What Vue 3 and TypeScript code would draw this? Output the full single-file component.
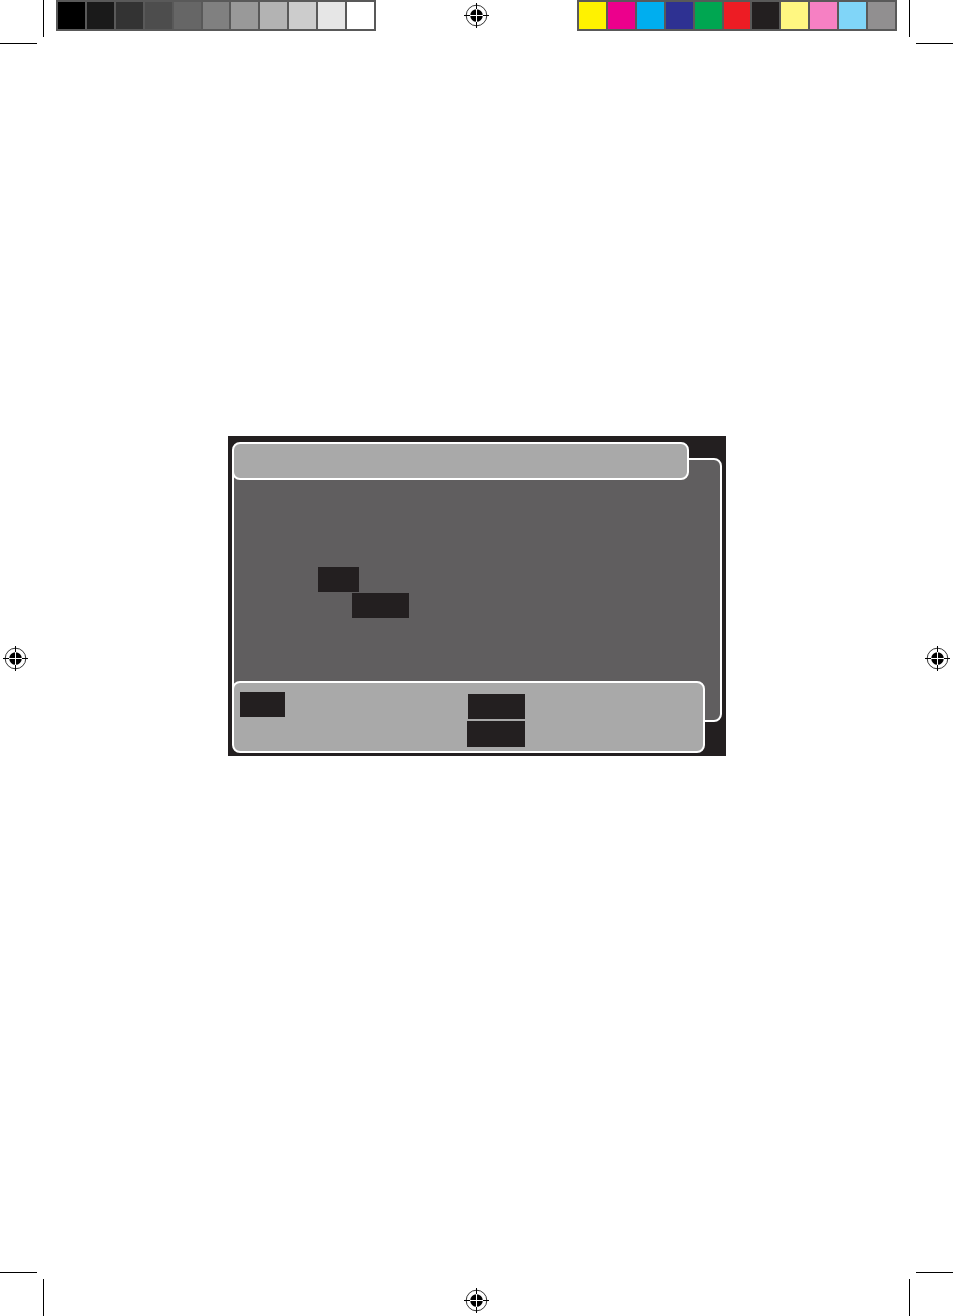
<script setup lang="ts">
import { h } from 'vue'

const grays: string[] = [
  '#000000', '#1a1a1a', '#333333', '#4d4d4d', '#666666', '#808080',
  '#999999', '#b3b3b3', '#cccccc', '#e6e6e6', '#ffffff',
]
const inks: string[] = [
  '#fff200', '#ec008c', '#00aeef', '#2e3192', '#00a651', '#ed1c24',
  '#231f20', '#fff781', '#f680c3', '#80d5f8', '#918f90',
]

const RegistrationMark = () =>
  h('svg', { width: 25, height: 25, viewBox: '0 0 25 25', 'aria-hidden': 'true' }, [
    h('circle', { cx: 12.5, cy: 12.5, r: 10.3, fill: 'none', stroke: '#000', 'stroke-width': 0.8 }),
    h('path', { d: 'M0 12.5H25M12.5 0V25', stroke: '#000', 'stroke-width': 1 }),
    h('circle', { cx: 12.5, cy: 12.5, r: 6.3, fill: '#000' }),
    h('path', { d: 'M6 12.5H19M12.5 6V19', stroke: '#fff', 'stroke-width': 1 }),
  ])

const CropMark = () =>
  h('svg', { width: 44, height: 44, viewBox: '0 0 44 44', 'aria-hidden': 'true' }, [
    h('path', { d: 'M43.5 0V37M0 43.5H37', fill: 'none', stroke: '#000', 'stroke-width': 1 }),
  ])
</script>

<template>
  <div class="sheet">
    <header class="edge top">
      <CropMark class="crop" />
      <div class="strip">
        <span v-for="c in grays" :key="c" :style="{ background: c }"></span>
      </div>
      <div class="center"><RegistrationMark class="mark" /></div>
      <div class="strip">
        <span v-for="c in inks" :key="c" :style="{ background: c }"></span>
      </div>
      <CropMark class="crop flip-x" />
    </header>

    <main class="middle">
      <RegistrationMark class="mark side-left" />
      <section class="screen">
        <div class="backdrop"></div>
        <div class="panel title"></div>
        <div class="content">
          <span class="chip short"></span>
          <span class="chip indent"></span>
        </div>
        <div class="panel legend">
          <span class="chip key"></span>
          <div class="keys">
            <span class="chip"></span>
            <span class="chip large"></span>
          </div>
        </div>
      </section>
      <RegistrationMark class="mark side-right" />
    </main>

    <footer class="edge bottom">
      <CropMark class="crop flip-y" />
      <div class="center"><RegistrationMark class="mark" /></div>
      <CropMark class="crop flip-xy" />
    </footer>
  </div>
</template>

<style>
body {
  margin: 0;
  background: #fff;
}
</style>

<style scoped>
.sheet {
  display: flex;
  flex-direction: column;
  min-height: 100vh;
  background: #fff;
}
.edge {
  display: flex;
  align-items: flex-start;
}
.crop,
.mark {
  display: block;
  flex: none;
}
.flip-x {
  transform: scaleX(-1);
}
.flip-y {
  transform: scaleY(-1);
}
.flip-xy {
  transform: scale(-1, -1);
}
.strip {
  box-sizing: border-box;
  flex: 0 1 320px;
  display: grid;
  grid-template-columns: repeat(11, 1fr);
  grid-auto-rows: 27px;
  gap: 2px;
  padding: 2px;
  margin: 0 12px;
  background: #595959;
}
.top .strip:nth-of-type(1) {
  margin-right: 0;
}
.top .strip:nth-of-type(3) {
  margin-left: 0;
}
.center {
  flex: 1;
  display: flex;
  justify-content: center;
}
.top .center {
  padding-top: 3px;
}
.bottom .center {
  padding-top: 16px;
}
.middle {
  flex: 1;
  display: grid;
  grid-template-columns: auto 1fr auto;
  align-items: center;
}
.side-left {
  margin: 1px 1px 0 3px;
}
.side-right {
  margin: 1px 3px 0 0;
}
.screen {
  box-sizing: border-box;
  align-self: start;
  justify-self: center;
  width: 100%;
  max-width: 498px;
  margin: 392px 0;
  padding: 6px 4px 3px;
  display: grid;
  grid-template-columns: 1fr;
  grid-template-rows: 38px auto 72px;
  background: #231f20;
}
.backdrop,
.panel {
  box-sizing: border-box;
  border: 2px solid #fff;
  border-radius: 8px;
}
.backdrop {
  grid-area: 1 / 1 / 4 / 2;
  margin: 16px 0 31px;
  background: #605e5f;
}
.panel {
  background: #a9a9a9;
}
.title {
  grid-area: 1 / 1;
  margin-right: 33px;
}
.content {
  grid-area: 2 / 1;
  display: flex;
  flex-direction: column;
  gap: 1px;
  padding: 87px 86px 63px;
}
.legend {
  grid-area: 3 / 1;
  display: grid;
  grid-template-columns: 227px 1fr;
  align-items: start;
  margin-right: 17px;
  padding: 9px 6px;
}
.keys {
  display: flex;
  flex-direction: column;
  align-items: flex-end;
  justify-self: start;
  gap: 2px;
  padding-top: 2px;
}
.chip {
  display: block;
  width: 57px;
  height: 25px;
  background: #231f20;
}
.short {
  width: 41px;
}
.indent {
  margin-left: 34px;
}
.key {
  width: 45px;
}
.large {
  width: 58px;
  height: 26px;
}
</style>
